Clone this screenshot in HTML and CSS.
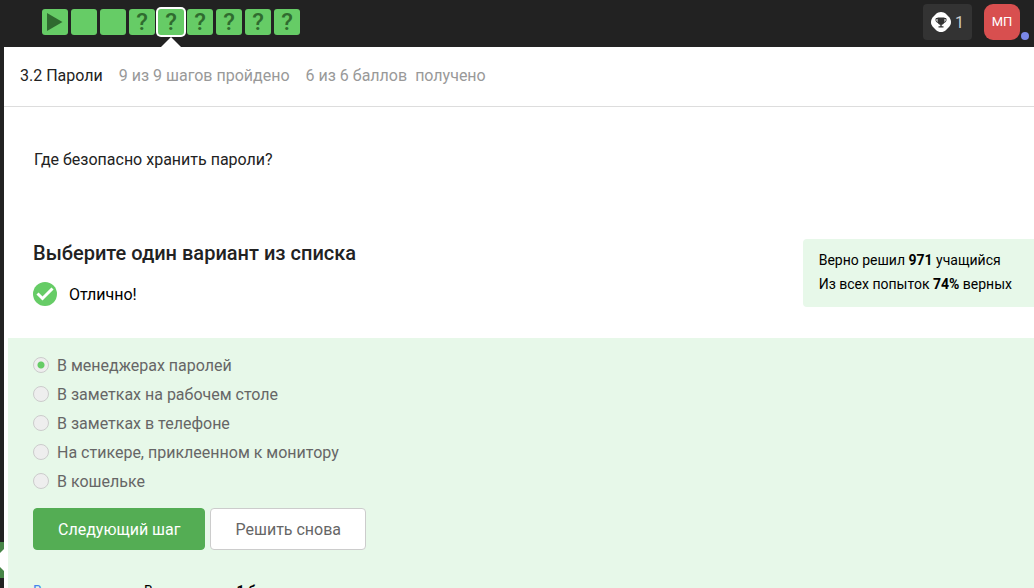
FILE: index.html
```html
<!DOCTYPE html>
<html lang="ru">
<head>
<meta charset="utf-8">
<title>3.2 Пароли</title>
<link rel="stylesheet" href="styles.css">
</head>
<body>
<header class="topbar">
  <nav class="steps" aria-label="Шаги урока">
    <a class="step" href="#1" aria-label="Видео"><svg class="play" viewBox="0 0 26 26"><path d="M5 4L20.500 13L5 22Z"/></svg></a>
    <a class="step" href="#2" aria-label="Шаг 2"></a>
    <a class="step" href="#3" aria-label="Шаг 3"></a>
    <a class="step" href="#4">?</a>
    <a class="step current" href="#5" aria-current="step">?</a>
    <a class="step" href="#6">?</a>
    <a class="step" href="#7">?</a>
    <a class="step" href="#8">?</a>
    <a class="step" href="#9">?</a>
  </nav>
  <div class="account">
    <button class="awards" type="button">
      <svg class="trophy" viewBox="0 0 20 20"><path class="badge" d="M10 0C12 0 13.500 .8 14.800 1.800L18.200 5.200C19.200 6.500 20 8 20 10S19.200 13.500 18.200 14.800L14.800 18.200C13.500 19.200 12 20 10 20S6.500 19.200 5.200 18.200L1.800 14.800C.8 13.500 0 12 0 10S.8 6.500 1.800 5.200L5.200 1.800C6.500 .8 8 0 10 0Z"/><path class="cup" d="M6.500 5.500H13.500V9C13.500 11.300 12.200 12.500 10.700 12.800V14.200H12.500V15.500H7.500V14.200H9.300V12.800C7.800 12.500 6.500 11.300 6.500 9Z"/><path class="handles" d="M7 6.500H5V8.500Q5 10.200 7.200 10.500M13 6.500H15V8.500Q15 10.200 12.800 10.500"/></svg>
      <span>1</span>
    </button>
    <button class="avatar" type="button">МП<span class="dot"></span></button>
  </div>
</header>
<div class="shell">
  <aside class="rail"><button class="toggle" type="button" aria-label="Открыть меню"><svg class="chevron" viewBox="0 0 4 36"><path d="M4 7V29L0 25V11Z"/></svg></button></aside>
  <main class="content">
    <div class="lesson">
      <h1 class="title">3.2 Пароли</h1>
      <span>9 из 9 шагов пройдено</span>
      <span class="score"><span>6 из 6 баллов</span><span>получено</span></span>
    </div>
    <p class="question">Где безопасно хранить пароли?</p>
    <section class="task">
      <div>
        <h2 class="heading">Выберите один вариант из списка</h2>
        <p class="result"><svg class="check" viewBox="0 0 24 24"><circle cx="12" cy="12" r="12"/><path d="M4.500 11.500L9.500 16.500L19.500 6.500"/></svg><span>Отлично!</span></p>
      </div>
      <div class="stats">
        <p>Верно решил <b>971</b> учащийся</p>
        <p>Из всех попыток <b>74%</b> верных</p>
      </div>
    </section>
    <form class="quiz">
      <div class="options">
        <label class="option"><input type="radio" name="answer" checked>В менеджерах паролей</label>
        <label class="option"><input type="radio" name="answer">В заметках на рабочем столе</label>
        <label class="option"><input type="radio" name="answer">В заметках в телефоне</label>
        <label class="option"><input type="radio" name="answer">На стикере, приклеенном к монитору</label>
        <label class="option"><input type="radio" name="answer">В кошельке</label>
      </div>
      <div class="actions">
        <button class="btn primary" type="button">Следующий шаг</button>
        <button class="btn" type="button">Решить снова</button>
      </div>
      <div class="summary"><a href="#solutions">Ваши решения</a><span>Вы получили: <b>1 балл</b></span></div>
    </form>
  </main>
</div>
</body>
</html>
```
FILE: styles.css
```css
* { box-sizing: border-box; }
body {
  margin: 0;
  height: 100vh;
  overflow: hidden;
  display: flex;
  flex-direction: column;
  font: 16px/24px Roboto, "Noto Sans", sans-serif;
  color: #222;
  background: #fff;
}
p, h1, h2 { margin: 0; }
button { font: inherit; cursor: pointer; }
a { text-decoration: none; }

.topbar {
  flex: none;
  height: 47px;
  padding: 4px 14px 7px 42px;
  display: flex;
  justify-content: space-between;
  background: #222;
}
.steps { display: flex; gap: 3px; padding-top: 5px; }
.step {
  position: relative;
  width: 26px;
  height: 26px;
  border-radius: 3px;
  background: #66cc66;
  color: #2f6b2f;
  font-size: 24px;
  font-weight: 500;
  line-height: 26px;
  text-align: center;
}
.current { box-shadow: 0 0 0 2px #fff; }
.current::after {
  content: "";
  position: absolute;
  left: 3px;
  top: 28px;
  border: 10px solid transparent;
  border-top: 0;
  border-bottom-color: #fff;
}
.play { display: block; fill: #2f6b2f; }

.account { display: flex; gap: 12px; }
.awards, .avatar { height: 36px; border: 0; padding: 0 8px; }
.awards {
  display: flex;
  align-items: center;
  gap: 4px;
  border-radius: 4px;
  background: #333;
  color: #ccc;
}
.trophy { width: 20px; height: 20px; }
.badge { fill: #fff; }
.cup { fill: #333; }
.handles { fill: none; stroke: #333; }
.awards span { width: 9px; padding-top: 2px; }
.avatar {
  position: relative;
  width: 36px;
  padding: 0;
  border-radius: 9px;
  background: #d84f4f;
  color: #fff;
  font-size: 13px;
}
.dot {
  position: absolute;
  right: -9px;
  bottom: 0;
  width: 8px;
  height: 8px;
  border-radius: 50%;
  background: #7b88e8;
}

.shell { flex: 1; min-height: 0; display: flex; }
.rail {
  flex: none;
  width: 4px;
  display: flex;
  flex-direction: column;
  justify-content: flex-end;
  padding-bottom: 10px;
  background: #222;
}
.toggle { width: 4px; height: 36px; padding: 0; border: 0; background: #478547; }
.chevron { display: block; fill: #fff; }
.content { flex: 1; min-width: 0; }
.lesson {
  display: flex;
  align-items: center;
  gap: 16px;
  height: 60px;
  padding: 0 16px 2px;
  border-bottom: 1px solid #ddd;
  color: #999;
}
.title { font-size: 16px; font-weight: 400; color: #222; }
.score { display: flex; gap: 8px; }
.question { padding: 41px 30px 0; }
.task {
  display: flex;
  justify-content: space-between;
  align-items: flex-start;
  margin-top: 67px;
  padding-left: 29px;
  height: 99px;
}
.heading { font-size: 20px; font-weight: 500; line-height: 28px; }
.result { display: flex; align-items: center; gap: 12px; margin-top: 14px; color: #000; }
.result span { padding-top: 2px; }
.check { width: 24px; height: 24px; fill: #66cc66; }
.check path { fill: none; stroke: #fff; stroke-width: 3; }
.stats {
  padding: 9px 22px 11px 16px;
  border-radius: 4px 0 0 4px;
  background: #e7f8e9;
  color: #000;
  font-size: 14px;
}
b { font-weight: 700; }
.quiz {
  margin-left: 4px;
  padding: 14px 25px 24px;
  background: #e7f8e9;
}
.option {
  display: flex;
  align-items: center;
  gap: 8px;
  padding: 2px 0;
  color: #666;
}
.option + .option { margin-top: 1px; }
.option input {
  appearance: none;
  width: 16px;
  height: 16px;
  margin: 0 0 2px;
  border: 1px solid #ccc;
  border-radius: 50%;
  background: #eee;
}
.option input:checked { background: radial-gradient(circle, #66cc66 3px, #eee 4px); }
.actions { display: flex; gap: 5px; margin-top: 12px; }
.btn {
  height: 42px;
  padding: 2px 24px 0;
  border: 1px solid #ccc;
  border-radius: 4px;
  background: #fff;
  color: #666;
}
.primary { border-color: #54ad54; background: #54ad54; color: #fff; }
.summary { display: flex; gap: 14px; margin-top: 29px; font-size: 14px; color: #000; }
.summary a { color: #4485ed; }
```
